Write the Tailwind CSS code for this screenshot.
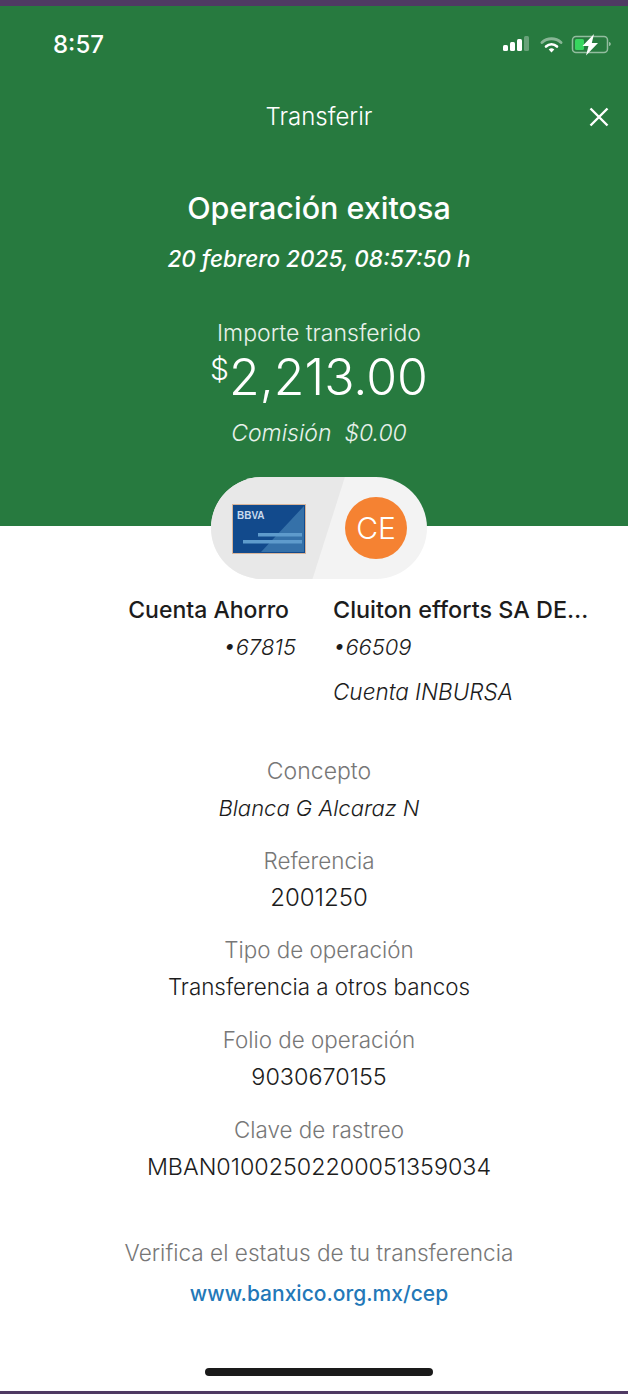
<!DOCTYPE html>
<html><head><meta charset="utf-8"><script src="https://cdn.jsdelivr.net/npm/@tailwindcss/browser@4"></script></head>
<body class="m-0 bg-white">
<div class="w-[628px] h-[1394px] overflow-hidden flex flex-col bg-white font-['Inter',sans-serif] text-[#1c1c1c]">
  <div class="h-[6px] shrink-0 bg-[#4f3a63]"></div>
  <header class="h-[520px] shrink-0 pl-[10px] bg-[#277a3f] text-white flex flex-col">
    <div class="h-[78px] pt-[23px] pl-[43px] pr-[15px] flex items-start justify-between">
      <span class="font-['Inter',sans-serif] font-medium text-[24px] leading-[32px]">8:57</span>
      <svg class="mt-[4px]" width="110" height="24" viewBox="0 0 110 24" fill="none">
        <rect x="0" y="12" width="5" height="6" rx="1.500" fill="#fff"/><rect x="7" y="9" width="5" height="9" rx="1.500" fill="#fff"/><rect x="14" y="6" width="5" height="12" rx="1.500" fill="#fff"/><rect x="21" y="3" width="5" height="15" rx="1.500" fill="#fff" fill-opacity=".3"/>
        <path d="M39 9.500a14 14 0 0 1 19 0" stroke="#fff" stroke-opacity=".45" stroke-width="3" stroke-linecap="round"/>
        <path d="M43 13.500a8 8 0 0 1 11 0" stroke="#fff" stroke-width="2.600" stroke-linecap="round"/>
        <path d="M45.700 16.500a4 4 0 0 1 5.600 0L48.500 19.500Z" fill="#fff"/>
        <rect x="69.500" y="3.500" width="35" height="16" rx="3.500" stroke="#fff" stroke-opacity=".5" stroke-width="1.500"/>
        <rect x="72" y="6" width="9" height="11" rx="1.500" fill="#38d65f"/>
        <path d="M106 9v4c1.200-.3 1.800-1.100 1.800-2s-.6-1.700-1.800-2Z" fill="#fff" fill-opacity=".5"/>
        <path d="M91 1 79.500 13h6L83 22.500 95 10h-6.200Z" fill="#fff"/>
      </svg>
    </div>
    <div class="relative h-[66px] flex items-center justify-center">
      <span class="font-light text-[24px] leading-[32px]">Transferir</span>
      <svg class="absolute right-[19px] top-[23px]" width="20" height="20" viewBox="0 0 20 20" fill="none"><path d="M1.500 1.500 18.500 18.500M18.500 1.500 1.500 18.500" stroke="#fff" stroke-width="2.400"/></svg>
    </div>
    <h1 class="text-center font-medium text-[30.500px] leading-[40px] mt-[38px]">Operación exitosa</h1>
    <p class="text-center italic font-medium text-[22.500px] leading-[30px] mt-[16px]">20 febrero 2025, 08:57:50 h</p>
    <p class="text-center font-light text-[23px] leading-[30px] mt-[44px] text-white/90">Importe transferido</p>
    <div class="flex justify-center items-start font-light leading-[56px] mt-[1px]">
      <span class="text-[30px] leading-[40px]">$</span><span class="text-[50px]">2,213.00</span>
    </div>
    <p class="text-center italic font-light text-[23px] leading-[30px] mt-[13px] text-white/90 whitespace-pre">Comisión  $0.00</p>
  </header>
  <div class="relative z-10 mt-[-49px] ml-[211px] w-[216px] h-[102px] shrink-0 rounded-full overflow-hidden bg-[#f3f3f3] flex items-center">
    <div class="absolute inset-0 bg-[#e8e8e8] [clip-path:polygon(0_0,62%_0,47%_100%,0_100%)]"></div>
    <svg class="relative ml-[21px] mt-[1px]" width="74" height="50" viewBox="0 0 74 50">
      <rect x="0.500" y="0.500" width="73" height="49" fill="#124a8c" stroke="#d9b59a"/>
      <path d="M72 2V48H29Z" fill="#3f7bb0" fill-opacity=".8"/>
      <rect x="26" y="29" width="44" height="3.500" fill="#5e9bcc"/><rect x="11" y="36" width="59" height="3.500" fill="#5e9bcc"/>
    </svg>
    <span class="absolute left-[26px] top-[32px] font-['Liberation_Sans',sans-serif] font-bold text-[10px] leading-[14px] text-[#c8d9ec]">BBVA</span>
    <div class="absolute left-[134px] top-[20px] w-[62px] h-[62px] rounded-full bg-[#f58232] flex items-center justify-center text-white font-light text-[30px]">CE</div>
  </div>
  <div class="flex mt-[14px] h-[146px] text-[22px]">
    <div class="w-[296px] shrink-0 flex flex-col items-end">
      <p class="font-medium leading-[34px] text-[23px] mr-[7px]">Cuenta Ahorro</p>
      <p class="italic font-light leading-[30px] mt-[5px]">•67815</p>
    </div>
    <div class="ml-[37px] w-[270px] flex flex-col">
      <p class="font-medium leading-[34px] text-[23.400px] whitespace-nowrap">Cluiton efforts SA DE…</p>
      <p class="italic font-light leading-[30px] mt-[5px]">•66509</p>
      <p class="italic font-light leading-[30px] text-[22.500px] mt-[15px]">Cuenta INBURSA</p>
    </div>
  </div>
  <dl class="mt-[17px] pl-[10px] flex flex-col items-center text-center text-[22.400px] leading-[30px] font-light">
    <dt class="text-[#777] text-[23px]">Concepto</dt>
    <dd class="mt-[7px] italic text-[22px]">Blanca G Alcaraz N</dd>
    <dt class="text-[#777] mt-[23px]">Referencia</dt>
    <dd class="mt-[7px] text-[24px]">2001250</dd>
    <dt class="text-[#777] mt-[22px]">Tipo de operación</dt>
    <dd class="mt-[7px]">Transferencia a otros bancos</dd>
    <dt class="text-[#777] mt-[23px]">Folio de operación</dt>
    <dd class="mt-[7px] text-[23.400px]">9030670155</dd>
    <dt class="text-[#777] mt-[23px]">Clave de rastreo</dt>
    <dd class="mt-[7px] text-[23.300px]">MBAN01002502200051359034</dd>
  </dl>
  <p class="mt-[56px] pl-[10px] text-center text-[22.600px] leading-[30px] font-light text-[#777]">Verifica el estatus de tu transferencia</p>
  <a class="mt-[11px] pl-[10px] text-center text-[21px] leading-[30px] font-medium text-[#2378b8]">www.banxico.org.mx/cep</a>
  <div class="mt-[auto] pl-[10px] flex flex-col items-center">
    <div class="w-[228px] h-[8px] rounded-full bg-[#1a1a1a]"></div>
    <div class="mt-[15px] ml-[-10px] h-[3px] w-[628px] bg-[#4f3a63]"></div>
  </div>
</div>
</body></html>
